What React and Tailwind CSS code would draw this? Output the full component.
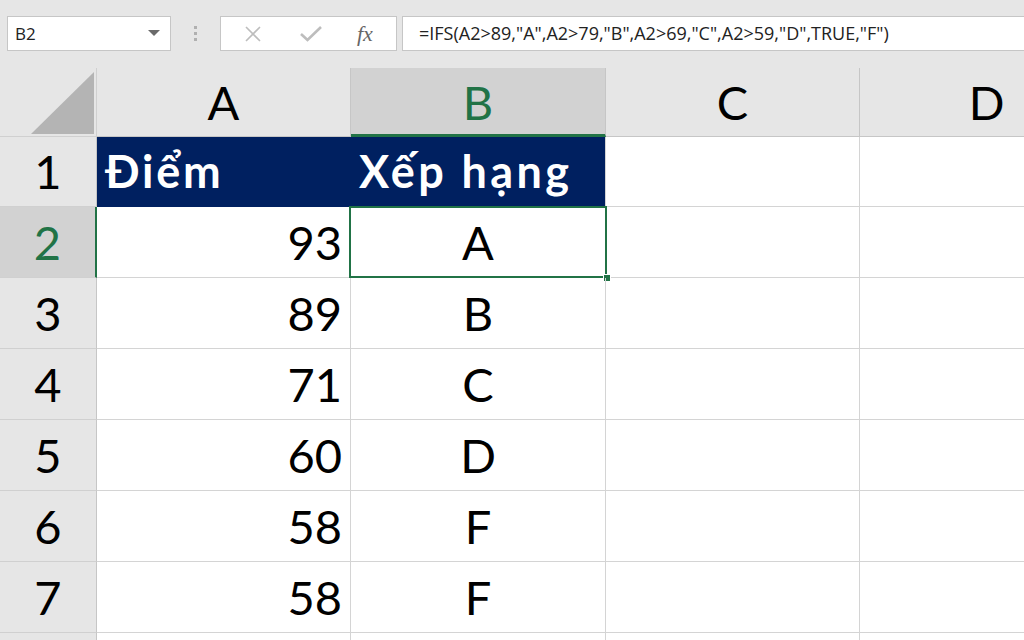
import React from "react";

const COLS = [
  { k: "A", w: "w-[254px]" },
  { k: "B", w: "w-[255px]" },
  { k: "C", w: "w-[254px]" },
  { k: "D", w: "w-[254px]" },
];

const ROWS = [
  { n: 1, h: "h-[70px]", a: "Điểm", b: "Xếp hạng", head: true },
  { n: 2, h: "h-[71px]", a: "93", b: "A", sel: true },
  { n: 3, h: "h-[71px]", a: "89", b: "B" },
  { n: 4, h: "h-[71px]", a: "71", b: "C" },
  { n: 5, h: "h-[71px]", a: "60", b: "D" },
  { n: 6, h: "h-[71px]", a: "58", b: "F" },
  { n: 7, h: "h-[71px]", a: "58", b: "F" },
  { n: "", h: "h-[71px]", a: "", b: "" },
];

export default function App() {
  return (
    <div className="w-[1024px] h-[640px] overflow-hidden bg-white font-['Lato',sans-serif] text-black">
      {/* formula bar */}
      <div className="h-[68px] bg-[#e6e6e6] flex items-start pt-[16px] pl-[7px]">
        <div className="w-[164px] h-[35px] bg-white border border-[#c6c6c6] flex items-center justify-between pl-[7px] pr-[10px]">
          <span className="text-[17px] text-[#222] font-['Open_Sans',sans-serif]">B2</span>
          <svg width="12" height="7" viewBox="0 0 12 7">
            <path d="M0 0 L12 0 L6 6 Z" fill="#6a6a6a" />
          </svg>
        </div>
        <div className="w-[49px] h-[35px] flex flex-col items-center justify-center gap-[3px]">
          <span className="w-[3px] h-[3px] bg-[#b0b0b0]" />
          <span className="w-[3px] h-[3px] bg-[#b0b0b0]" />
          <span className="w-[3px] h-[3px] bg-[#b0b0b0]" />
        </div>
        <div className="w-[177px] h-[35px] bg-white border border-[#c6c6c6] flex items-center">
          <svg className="ml-[23px]" width="18" height="18" viewBox="0 0 18 18">
            <path d="M2 2 L16 16 M16 2 L2 16" stroke="#bdbdbd" strokeWidth="1.6" fill="none" />
          </svg>
          <svg className="ml-[38px]" width="22" height="18" viewBox="0 0 22 18">
            <path d="M1 9 L7.5 15 L21 2" stroke="#bdbdbd" strokeWidth="2.6" fill="none" />
          </svg>
          <span className="ml-[35px] text-[22px] italic text-[#666] font-['Liberation_Serif',serif] leading-none">fx</span>
        </div>
        <div className="ml-[5px] flex-1 h-[35px] bg-white border border-[#c6c6c6] border-r-0 flex items-center pl-[16px]">
          <span className="text-[18px] text-[#222] font-['Open_Sans',sans-serif] whitespace-nowrap tracking-[0px]">
            =IFS(A2&gt;89,"A",A2&gt;79,"B",A2&gt;69,"C",A2&gt;59,"D",TRUE,"F")
          </span>
        </div>
      </div>

      {/* column headers */}
      <div className="h-[69px] flex bg-[#e6e6e6]">
        <div className="w-[97px] shrink-0 border-r border-b border-[#d0d0d0] relative">
          <svg className="absolute left-[31px] top-[4px]" width="64" height="63" viewBox="0 0 64 63">
            <path d="M0 62 L63 0 L63 62 Z" fill="#b4b4b4" />
          </svg>
        </div>
        {COLS.map((c) =>
          c.k === "B" ? (
            <div
              key={c.k}
              className={`${c.w} shrink-0 bg-[#d2d2d2] border-r border-[#c6c6c6] border-b-[3px] border-b-[#217346] flex items-center justify-center text-[47px] text-[#217346] pt-[2px]`}
            >
              {c.k}
            </div>
          ) : (
            <div
              key={c.k}
              className={`${c.w} shrink-0 border-r border-b border-[#c6c6c6] flex items-center justify-center text-[47px]`}
            >
              {c.k}
            </div>
          )
        )}
      </div>

      {/* rows */}
      {ROWS.map((r, i) => (
        <div key={i} className={`${r.h} flex`}>
          <div
            className={`w-[97px] shrink-0 flex items-center justify-center text-[47px] border-b border-[#d0d0d0] ${
              r.sel
                ? "bg-[#d2d2d2] text-[#217346] border-r-[2px] border-r-[#217346]"
                : "bg-[#e6e6e6] border-r border-r-[#c6c6c6]"
            }`}
          >
            {r.n}
          </div>
          {r.head ? (
            <>
              <div className="w-[254px] shrink-0 bg-[#002060] text-white font-bold text-[45px] tracking-[2.8px] flex items-center pl-[8px]">
                {r.a}
              </div>
              <div className="w-[255px] shrink-0 bg-[#002060] text-white font-bold text-[45px] tracking-[3.4px] flex items-center pl-[8px] border-r border-[#d4d4d4]">
                {r.b}
              </div>
            </>
          ) : (
            <>
              <div className="w-[254px] shrink-0 border-r border-b border-[#d4d4d4] flex items-center justify-end pr-[8px] text-[47px]">
                {r.a}
              </div>
              <div className="w-[255px] shrink-0 border-r border-b border-[#d4d4d4] flex items-center justify-center text-[47px] relative">
                {r.b}
                {r.sel && (
                  <>
                    <div className="absolute left-[-2px] top-[-1px] right-[-2px] bottom-[-1px] border-2 border-[#217346] pointer-events-none" />
                    <div className="absolute right-[-6px] bottom-[-5px] w-[8px] h-[8px] bg-[#217346] border border-white" />
                  </>
                )}
              </div>
            </>
          )}
          <div className="w-[254px] shrink-0 border-r border-b border-[#d4d4d4]" />
          <div className="w-[254px] shrink-0 border-r border-b border-[#d4d4d4]" />
        </div>
      ))}
    </div>
  );
}
